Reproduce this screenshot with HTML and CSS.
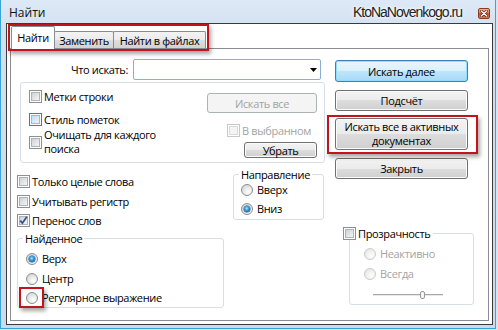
FILE: index.html
```html
<!DOCTYPE html>
<html lang="ru">
<head>
<meta charset="utf-8">
<title>Найти</title>
<link rel="stylesheet" href="styles.css">
</head>
<body>
<div class="window">
  <div class="titlebar">
    <span class="title">Найти</span>
    <span class="brand">KtoNaNovenkogo.ru</span>
    <span class="close"><svg width="8" height="7" viewBox="0 0 8 7"><path d="M1.2 1 L6.8 6 M6.8 1 L1.2 6" stroke="#5a1a0a" stroke-width="2.6" stroke-linecap="round"/><path d="M1.2 1 L6.8 6 M6.8 1 L1.2 6" stroke="#fff" stroke-width="1.4" stroke-linecap="round"/></svg></span>
  </div>
  <div class="client">
    <div class="tabs">
      <div class="tab active">Найти</div>
      <div class="tab t-replace">Заменить</div>
      <div class="tab t-files">Найти в файлах</div>
    </div>
    <div class="panel">
      <div class="col-a">
        <div class="search-row">
          <span class="search-label">Что искать:</span>
          <div class="combo"><svg width="7" height="4" viewBox="0 0 7 4"><path d="M0 0H7L3.5 4Z" fill="#000"/></svg></div>
        </div>
        <div class="g-opts">
          <div class="opts-left">
            <div class="check r1"><span class="cb"><span class="cbi"></span></span><span>Метки строки</span></div>
            <div class="check r2"><span class="cb hot"><span class="cbi"></span></span><span>Стиль пометок</span></div>
            <div class="check r3"><span class="cb"><span class="cbi"></span></span><span class="two">Очищать для каждого<br>поиска</span></div>
          </div>
          <div class="opts-right">
            <div class="btn disabled b-all">Искать все</div>
            <div class="check disabled in-sel"><span class="cb"><span class="cbi"></span></span><span>В выбранном</span></div>
            <div class="btn b-clear">Убрать</div>
          </div>
        </div>
        <div class="lower">
          <div class="lower-left">
            <div class="check l1"><span class="cb"><span class="cbi"></span></span><span>Только целые слова</span></div>
            <div class="check l2"><span class="cb"><span class="cbi"></span></span><span>Учитывать регистр</span></div>
            <div class="check l3"><span class="cb"><span class="cbi"><svg width="9" height="9" viewBox="0 0 9 9"><path d="M1.3 4.6 L3.4 7.2 L7.8 0.8" fill="none" stroke="#34508a" stroke-width="1.7"/></svg></span></span><span>Перенос слов</span></div>
            <fieldset class="fs found">
              <legend>Найденное</legend>
              <div class="radio q1"><span class="rb on"></span><span>Верх</span></div>
              <div class="radio q2"><span class="rb"></span><span>Центр</span></div>
              <div class="radio q3"><span class="rb"></span><span>Регулярное выражение</span></div>
            </fieldset>
          </div>
          <fieldset class="fs dir">
            <legend>Направление</legend>
            <div class="radio d1"><span class="rb"></span><span>Вверх</span></div>
            <div class="radio d2"><span class="rb on"></span><span>Вниз</span></div>
          </fieldset>
        </div>
      </div>
      <div class="col-b">
        <div class="btn default b-next">Искать далее</div>
        <div class="btn b-count">Подсчёт</div>
        <div class="btn b-docs"><span class="two">Искать все в активных<br>документах</span></div>
        <div class="btn b-close">Закрыть</div>
        <fieldset class="fs trans">
          <legend><span class="cb"><span class="cbi"></span></span><span>Прозрачность</span></legend>
          <div class="radio disabled p1"><span class="rb"></span><span>Неактивно</span></div>
          <div class="radio disabled p2"><span class="rb"></span><span>Всегда</span></div>
          <div class="slider"><span class="thumb"></span></div>
        </fieldset>
      </div>
    </div>
  </div>
  <div class="mark m-tabs"></div>
  <div class="mark m-btn"></div>
  <div class="mark m-radio"></div>
</div>
</body>
</html>
```
FILE: styles.css
```css
* { box-sizing: border-box; }
html, body { margin: 0; padding: 0; }
body {
  width: 498px; height: 330px; overflow: hidden;
  font-family: "Open Sans", "Noto Sans", sans-serif;
  font-size: 11px; line-height: 13px; color: #000;
  letter-spacing: -0.35px;
}
.window {
  position: relative;
  width: 498px; height: 330px;
  background: linear-gradient(#dde9f6, #d2e0f0 30px, #cbdaec);
  padding: 0 5px 0 6px;
  display: flex; flex-direction: column;
  box-shadow: inset -2px -1px 0 #d6e5f4, inset -3px -2px 0 #3ba4d6, inset 1px 0 0 #3ba4d6;
}
.titlebar {
  height: 23px; flex: none;
  display: flex; align-items: center;
  padding: 2px 3px 0 3px;
}
.title { font-size: 12px; color: #111; letter-spacing: 0; }
.brand {
  margin-left: auto;
  font-family: "Liberation Sans", Arial, sans-serif;
  font-size: 14px; letter-spacing: -1px; color: #222;
  text-shadow: 0 0 5px #fff, 0 0 3px #fff;
  margin-right: 16px;
}
.close {
  width: 12px; height: 11px;
  border: 1px solid #8d3a26; border-radius: 2px;
  background: linear-gradient(#f4ae92, #e07a55 50%, #c9532a 50%, #dc7a48);
  display: flex; align-items: center; justify-content: center;
  margin-top: 1px;
}
.client {
  height: 302px; flex: none;
  border: 1px solid #3a3a3a;
  background: #fff;
  padding: 0 3px 3px 3px;
  display: flex; flex-direction: column;
}
.tabs { height: 24px; flex: none; display: flex; align-items: flex-end; padding-left: 1px; }
.tab {
  height: 17px; margin-left: -1px;
  border: 1px solid #898c95; border-bottom: none;
  background: linear-gradient(#f3f3f3, #ebebeb 50%, #dedede 50%, #d2d2d2);
  display: flex; align-items: center; justify-content: center;
  border-radius: 2px 2px 0 0;
}
.tab.active {
  width: 44px; height: 23px; margin-left: 0; margin-bottom: -1px;
  background: #fff; position: relative; z-index: 1; padding-bottom: 2px;
}
.t-replace { width: 60px; }
.t-files { width: 93px; }
.panel {
  flex: 1;
  border: 1px solid #898c95;
  background: #fff;
  display: grid; grid-template-columns: 308px 139px; column-gap: 10px;
  align-items: start;
  padding: 10px 0 0 6px;
}
.col-a, .col-b { display: flex; flex-direction: column; align-items: flex-start; }
.search-row { display: flex; align-items: center; height: 21px; }
.search-label { width: 111px; text-align: right; margin-right: 5px; }
.combo {
  width: 188px; height: 21px;
  border: 1px solid #8aaed6; border-radius: 2px;
  display: flex; align-items: center; justify-content: flex-end;
  padding-right: 3px;
}
.g-opts {
  margin: 2px 0 0 3px; width: 305px; height: 81px;
  border: 1px solid #d5dfe5; border-radius: 3px;
  display: flex; justify-content: space-between;
  padding: 0 7px 0 8px;
}
.opts-left { display: flex; flex-direction: column; }
.opts-right { display: flex; flex-direction: column; align-items: flex-start; padding-top: 10px; width: 110px; }
.check { display: flex; align-items: center; gap: 2px; }
.two { line-height: 14px; }
.r1 { margin-top: 7px; }
.r2 { margin-top: 10px; }
.r3 { margin-top: 2px; }
.cb {
  width: 13px; height: 13px; flex: none;
  border: 1px solid #8e8f8f; background: #fff; padding: 1px;
}
.cbi {
  display: flex; width: 9px; height: 9px;
  border: 1px solid #aeb3b9;
  background: linear-gradient(135deg, #cdd1d7, #f5f5f5);
}
.cbi svg { margin: -1px 0 0 -1px; overflow: visible; }
.cb.hot { border-color: #3c7fb1; }
.cb.hot .cbi { border-color: #79c6f9; background: linear-gradient(135deg, #b6e1fc, #e8f7fe); }
.check.disabled, .radio.disabled, .btn.disabled { color: #a3a3a3; }
.check.disabled .cb { border-color: #c8c8c8; }
.check.disabled .cbi { border-color: #dadada; background: #f4f4f4; }
.btn {
  display: flex; align-items: center; justify-content: center; text-align: center;
  border: 1px solid #707070; border-radius: 3px;
  background: linear-gradient(#f3f3f3, #ebebeb 50%, #dddddd 50%, #cfcfcf);
  box-shadow: inset 0 0 0 1px #fbfbfb;
  line-height: 13px;
}
.btn.disabled { border-color: #adb2b5; background: #f4f4f4; box-shadow: none; }
.btn.default {
  border-color: #3c7fb1;
  background: linear-gradient(#eaf6fd, #d9f0fc 50%, #bee6fd 50%, #a7d9f5);
  box-shadow: inset 0 0 0 1px #8fe0ff;
}
.b-all { width: 110px; height: 20px; }
.in-sel { margin-top: 11px; margin-left: 20px; }
.b-clear { margin-top: 5px; align-self: flex-end; width: 73px; height: 16px; }
.lower { display: grid; grid-template-columns: 207px 91px; column-gap: 9px; margin-top: 5px; align-items: start; }
.lower-left { display: flex; flex-direction: column; }
.l1 { margin-top: 7px; }
.l2 { margin-top: 7px; }
.l3 { margin-top: 6px; }
.fs {
  margin: 0; padding: 0; min-width: 0;
  border: 1px solid #d5dfe5; border-radius: 3px;
}
.fs legend { padding: 0 2px; line-height: 13px; }
.found { margin-top: 5px; width: 207px; height: 76px; padding-left: 8px; }
.found legend { margin-left: -3px; }
.dir { margin-top: 0; width: 91px; height: 52px; padding-left: 7px; }
.dir legend { margin-left: -2px; }
.radio { display: flex; align-items: center; gap: 4px; line-height: 12px; height: 12px; }
.rb {
  width: 12px; height: 12px; flex: none; border-radius: 50%;
  border: 1px solid #8c8e90;
  background: radial-gradient(circle at 65% 70%, #ffffff 0, #eeeeee 35%, #d2d2d2 90%);
  display: grid; place-items: center;
}
.rb.on::after {
  content: ""; width: 6px; height: 6px; border-radius: 50%;
  background: radial-gradient(circle at 45% 40%, #b8ecff 0, #3aa5ea 35%, #0e5ea8 75%, #1c3d6c 100%);
  box-shadow: 0 0 0 0.5px #1b4d84;
}
.radio.disabled .rb { border-color: #cbcbcb; background: radial-gradient(circle at 65% 70%, #fff 0, #f3f3f3 40%, #e3e3e3 90%); }
.q1 { margin-top: 8px; }
.q2 { margin-top: 8px; }
.q3 { margin-top: 7px; }
.d1 { margin-top: 3px; }
.d2 { margin-top: 7px; }
.b-next { margin-top: 1px; width: 133px; height: 22px; }
.b-count { margin-top: 8px; width: 133px; height: 21px; }
.b-docs { margin-top: 7px; width: 133px; height: 32px; }
.b-close { margin-top: 8px; width: 133px; height: 21px; }
.trans { margin-top: 48px; margin-left: 14px; width: 125px; height: 78px; padding-left: 14px; }
.trans legend { margin-left: -21px; padding: 0 2px 0 0; display: flex; align-items: center; gap: 2px; }
.p1 { margin-top: 8px; }
.p2 { margin-top: 8px; }
.slider {
  margin-top: 11px; margin-left: 9px; width: 70px; height: 8px;
  display: flex;
  background:
    linear-gradient(#a8a8a8, #a8a8a8) 0 3px / 100% 1px no-repeat,
    linear-gradient(#e8e8e8, #e8e8e8) 0 4px / 100% 1px no-repeat;
}
.thumb {
  margin-left: 47px; width: 5px; height: 8px;
  border: 1px solid #9a9a9a; border-radius: 2px; background: #f6f6f6;
}
.mark {
  position: absolute;
  border: 2px solid #c3141c;
  box-shadow: 2px 3px 4px rgba(0,0,0,0.35);
}
.m-tabs { left: 8px; top: 24px; width: 201px; height: 27px; }
.m-btn { left: 327px; top: 115px; width: 151px; height: 39px; }
.m-radio { left: 19px; top: 287px; width: 25px; height: 21px; }
```
